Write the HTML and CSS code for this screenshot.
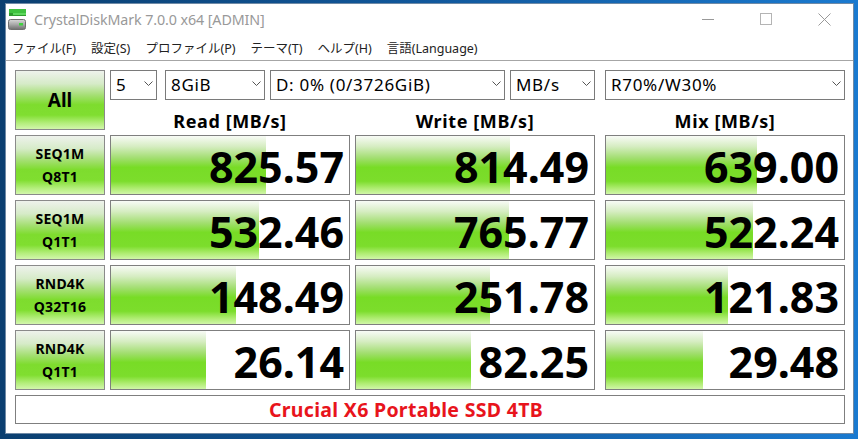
FILE: index.html
```html
<!DOCTYPE html>
<html lang="ja">
<head>
    <meta charset="UTF-8" />
    <title>CrystalDiskMark 7.0.0 x64 [ADMIN]</title>
    <link rel="stylesheet" href="styles.css">
</head>
<body>
<div class="window">
    <header class="titlebar">
        <svg class="app-icon" width="18" height="22" viewBox="0 0 18 22">
            <defs>
                <linearGradient id="disk" x1="0" y1="0" x2="0" y2="1">
                    <stop offset="0" stop-color="#d8d8d8"/>
                    <stop offset="0.5" stop-color="#a8a8a8"/>
                    <stop offset="1" stop-color="#6e6e6e"/>
                </linearGradient>
            </defs>
            <rect x="1" y="1" width="17" height="4" fill="#3fc23f"/>
            <rect x="1" y="5" width="17" height="3" fill="#2e9a2e"/>
            <rect x="5" y="5" width="13" height="2" fill="#5ed85e"/>
            <rect x="0.5" y="11.5" width="17" height="10" rx="2" fill="url(#disk)" stroke="#707070"/>
            <rect x="11" y="15" width="4" height="2.5" fill="#3fd23f"/>
        </svg>
        <span class="title">CrystalDiskMark 7.0.0 x64 [ADMIN]</span>
        <div class="caption-buttons">
            <span class="cap-btn">
                <svg width="12" height="12" viewBox="0 0 12 12"><path d="M0 6.5h12" stroke="#999" fill="none"/></svg>
            </span>
            <span class="cap-btn">
                <svg width="12" height="12" viewBox="0 0 12 12"><rect x="0.5" y="0.5" width="11" height="11" stroke="#b4b4b4" fill="none"/></svg>
            </span>
            <span class="cap-btn">
                <svg width="13" height="13" viewBox="0 0 13 13"><path d="M0.5 0.5l12 12M12.5 0.5l-12 12" stroke="#999" fill="none"/></svg>
            </span>
        </div>
    </header>

    <nav class="menubar">
        <span>ファイル(F)</span>
        <span>設定(S)</span>
        <span>プロファイル(P)</span>
        <span>テーマ(T)</span>
        <span>ヘルプ(H)</span>
        <span>言語(Language)</span>
    </nav>

    <main class="client">
        <div class="board">
            <div class="btn all">All</div>

            <div class="selects">
                <div class="select w-count"><span>5</span><svg class="chev" width="9" height="5" viewBox="0 0 9 5"><path d="M0.5 0.5l4 4 4-4" stroke="#555" fill="none"/></svg></div>
                <div class="select w-size"><span>8GiB</span><svg class="chev" width="9" height="5" viewBox="0 0 9 5"><path d="M0.5 0.5l4 4 4-4" stroke="#555" fill="none"/></svg></div>
                <div class="select w-drive"><span>D: 0% (0/3726GiB)</span><svg class="chev" width="9" height="5" viewBox="0 0 9 5"><path d="M0.5 0.5l4 4 4-4" stroke="#555" fill="none"/></svg></div>
                <div class="select w-unit"><span>MB/s</span><svg class="chev" width="9" height="5" viewBox="0 0 9 5"><path d="M0.5 0.5l4 4 4-4" stroke="#555" fill="none"/></svg></div>
                <div class="select w-mix"><span>R70%/W30%</span><svg class="chev" width="9" height="5" viewBox="0 0 9 5"><path d="M0.5 0.5l4 4 4-4" stroke="#555" fill="none"/></svg></div>
            </div>

            <div class="head">Read [MB/s]</div>
            <div class="head">Write [MB/s]</div>
            <div class="head mix">Mix [MB/s]</div>

            <div class="btn label">SEQ1M<br>Q8T1</div>
            <div class="cell"><div class="bar" style="width:155px"></div><span class="num">825.57</span></div>
            <div class="cell"><div class="bar" style="width:154px"></div><span class="num">814.49</span></div>
            <div class="cell mix"><div class="bar" style="width:151px"></div><span class="num">639.00</span></div>

            <div class="btn label">SEQ1M<br>Q1T1</div>
            <div class="cell"><div class="bar" style="width:148px"></div><span class="num">532.46</span></div>
            <div class="cell"><div class="bar" style="width:153px"></div><span class="num">765.77</span></div>
            <div class="cell mix"><div class="bar" style="width:147px"></div><span class="num">522.24</span></div>

            <div class="btn label">RND4K<br>Q32T16</div>
            <div class="cell"><div class="bar" style="width:125px"></div><span class="num">148.49</span></div>
            <div class="cell"><div class="bar" style="width:134px"></div><span class="num">251.78</span></div>
            <div class="cell mix"><div class="bar" style="width:122px"></div><span class="num">121.83</span></div>

            <div class="btn label">RND4K<br>Q1T1</div>
            <div class="cell"><div class="bar" style="width:95px"></div><span class="num">26.14</span></div>
            <div class="cell"><div class="bar" style="width:115px"></div><span class="num">82.25</span></div>
            <div class="cell mix"><div class="bar" style="width:97px"></div><span class="num">29.48</span></div>

            <div class="comment">Crucial X6 Portable SSD 4TB</div>
        </div>
    </main>
</div>
</body>
</html>
```

FILE: styles.css
```css
:root {
    --frame: #7f7f7f;
    --ui-font: 'Noto Sans', 'Noto Sans CJK JP', sans-serif;
}

* {
    box-sizing: border-box;
    margin: 0;
    padding: 0;
}

body {
    width: 858px;
    height: 439px;
    overflow: hidden;
    padding: 3px 4px 5px 5px;
    background: linear-gradient(90deg, #0b3f70, #11589c 50%, #1a7ad0);
    font-family: var(--ui-font);
    color: #000;
}

.window {
    width: 849px;
    height: 431px;
    background: #fff;
    border: 1px solid #6f8aa6;
    display: flex;
    flex-direction: column;
}

/* title bar */
.titlebar {
    height: 28px;
    display: flex;
    align-items: center;
}

.app-icon {
    margin: 2px 0 0 2px;
}

.title {
    margin: 3px 0 0 8px;
    font-size: 14.3px;
    color: #999;
    letter-spacing: -0.1px;
}

.caption-buttons {
    margin-left: auto;
    display: flex;
    height: 100%;
}

.cap-btn {
    width: 58px;
    display: flex;
    align-items: center;
    justify-content: center;
    padding-top: 2px;
}

/* menu */
.menubar {
    height: 29px;
    display: flex;
    align-items: center;
    gap: 15px;
    padding: 2px 0 0 6px;
    border-bottom: 1px solid #a6a6a6;
    font-size: 12.5px;
    color: #222;
}

/* main board */
.client {
    padding: 9px 0 0 9px;
}

.board {
    display: grid;
    grid-template-columns: 90px 240px 240px 245px;
    grid-template-rows: 30px 25px 60px 60px 60px 60px 29px;
    gap: 5px;
}

.mix {
    margin-left: 5px;
}

.btn {
    border: 1px solid #8a8a8a;
    background: linear-gradient(#eef2ec 0%, #d6ebc8 22%, #a4df72 42%, #7edc2e 58%, #80de30 76%, #b4ee7c 90%, #d2f6ac 100%);
    display: flex;
    align-items: center;
    justify-content: center;
    text-align: center;
    font-weight: 700;
}

.all {
    grid-row: 1 / span 2;
    font-size: 19px;
}

.label {
    font-size: 14px;
    line-height: 23px;
    padding-bottom: 1px;
    letter-spacing: 0.2px;
}

.selects {
    grid-column: 2 / span 3;
    display: flex;
}

.select {
    border: 1px solid #7a7a7a;
    display: flex;
    align-items: center;
    justify-content: space-between;
    padding: 0 3px 1px 5px;
    font-size: 17px;
    letter-spacing: 0.7px;
}

.chev {
    flex-shrink: 0;
    margin-top: -2px;
}

.w-count { width: 47px; }
.w-size { width: 100px; margin-left: 8px; }
.w-drive { width: 235px; margin-left: 5px; }
.w-unit { width: 85px; margin-left: 5px; }
.w-mix { width: 240px; margin-left: 10px; }

.head {
    font-size: 18px;
    font-weight: 700;
    text-align: center;
    line-height: 30px;
    letter-spacing: 0.6px;
    margin-top: 1px;
}

.cell {
    border: 1px solid var(--frame);
    display: grid;
}

.bar {
    grid-area: 1 / 1;
    background: linear-gradient(#f8fbf6 0%, #d6edc2 18%, #a2de70 38%, #78dc26 54%, #7cdd2c 78%, #aeec70 90%, #d0f6a8 100%);
}

.num {
    grid-area: 1 / 1;
    justify-self: end;
    align-self: center;
    font-size: 43px;
    font-weight: 700;
    line-height: 1;
    padding: 0 5px 0 0;
    margin-top: 2px;
}

.comment {
    grid-column: 1 / span 4;
    border: 1px solid var(--frame);
    display: flex;
    align-items: center;
    justify-content: center;
    padding: 0 48px 1px 0;
    font-size: 19.5px;
    font-weight: 700;
    letter-spacing: 0.3px;
    color: #e8141c;
}
```
